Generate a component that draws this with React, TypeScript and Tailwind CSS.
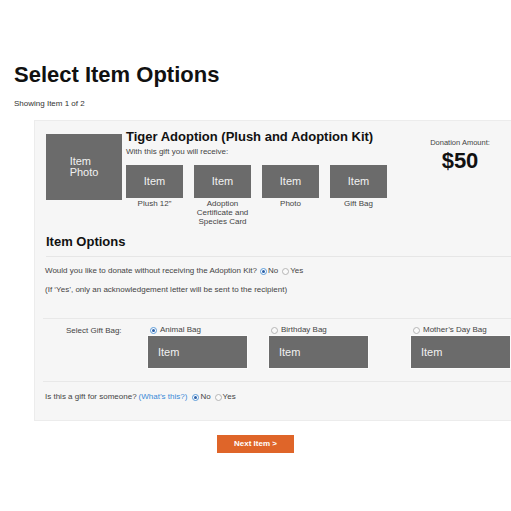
import React from "react";

function Radio({ checked }: { checked?: boolean }) {
  return checked ? (
    <span className="inline-flex h-[7px] w-[7px] items-center justify-center rounded-full border border-[#5a9ad8] bg-white">
      <span className="h-[3px] w-[3px] rounded-full bg-[#2a5fa8]" />
    </span>
  ) : (
    <span className="inline-block h-[7px] w-[7px] rounded-full border border-[#b5b5b5] bg-[#fafafa]" />
  );
}

function KitItem({ label }: { label: React.ReactNode }) {
  return (
    <div className="flex w-[57px] flex-col items-center">
      <div className="flex h-[33px] w-[57px] items-center justify-center bg-[#6b6b6b] text-[11px] leading-none text-[#f2f2f2]">
        Item
      </div>
      <div className="mt-[1px] w-[64px] text-center text-[8px] leading-[9px] text-[#444]">{label}</div>
    </div>
  );
}

function BagOption({ label, checked, width }: { label: string; checked?: boolean; width: string }) {
  return (
    <div className={width}>
      <div className="flex h-[10px] items-center gap-[3px] pl-[3px] text-[8px] leading-[10px] text-[#444]">
        <Radio checked={checked} />
        <span>{label}</span>
      </div>
      <div className="flex h-[34px] w-[101px] items-center border border-[#fbfbfb] bg-[#6b6b6b] pl-[10px] text-[11px] leading-none text-[#f2f2f2]">
        Item
      </div>
    </div>
  );
}

export default function App() {
  return (
    <div
      className="h-[511px] w-[511px] overflow-hidden bg-white"
      style={{ fontFamily: '"Liberation Sans", Arial, Helvetica, sans-serif' }}
    >
      <h1 className="ml-[14px] mt-[62px] text-[22px] font-bold leading-[26px] text-[#111]">Select Item Options</h1>
      <div className="ml-[14px] mt-[10px] text-[8px] leading-[12px] text-[#333]">Showing Item 1 of 2</div>

      <div className="ml-[34px] mt-[10px] w-[500px] border border-[#ececec] bg-[#f6f6f6] pb-[17px]">
        {/* top row */}
        <div className="flex pt-[13px]">
          <div className="ml-[11px] flex h-[66px] w-[76px] shrink-0 items-center justify-center bg-[#6b6b6b]">
            <div className="text-left text-[11px] leading-[11px] text-[#f2f2f2]">
              Item
              <br />
              Photo
            </div>
          </div>
          <div className="ml-[4px] w-[299px] -mt-[5px]">
            <div className="text-[13px] font-bold leading-[15px] text-[#111]">Tiger Adoption (Plush and Adoption Kit)</div>
            <div className="mt-[3px] text-[8px] leading-[10px] text-[#444]">With this gift you will receive:</div>
            <div className="mt-[8px] flex gap-[11px]">
              <KitItem label={"Plush 12\u201d"} />
              <KitItem
                label={
                  <>
                    Adoption
                    <br />
                    Certificate and
                    <br />
                    Species Card
                  </>
                }
              />
              <KitItem label="Photo" />
              <KitItem label="Gift Bag" />
            </div>
          </div>
          <div className="w-[70px] pt-[4px] text-center">
            <div className="text-[7.5px] leading-[10px] text-[#444]">Donation Amount:</div>
            <div className="mt-[1px] text-[22px] font-bold leading-[24px] text-[#111]">$50</div>
          </div>
        </div>

        {/* item options */}
        <div className="ml-[11px] mt-[8px] border-b border-[#e6e6e6] pb-[7px] text-[13px] font-bold leading-[15px] text-[#111]">
          Item Options
        </div>
        <div className="ml-[10px] mt-[8px] flex h-[12px] items-center text-[8px] leading-[12px] text-[#444]">
          <span>Would you like to donate without receiving the Adoption Kit?</span>
          <span className="ml-[3px] flex items-center gap-[1px]">
            <Radio checked />
            <span>No</span>
          </span>
          <span className="ml-[4px] flex items-center gap-[1px]">
            <Radio />
            <span>Yes</span>
          </span>
        </div>
        <div className="ml-[10px] mt-[7px] text-[8px] leading-[12px] text-[#444]">
          (If &#8216;Yes&#8217;, only an acknowledgement letter will be sent to the recipient)
        </div>

        {/* gift bag */}
        <div className="ml-[8px] mt-[22px] flex border-t border-b border-[#e8e8e8] pb-[12px] pt-[6px]">
          <div className="w-[104px] pl-[23px] text-[8px] leading-[12px] text-[#444]">Select Gift Bag:</div>
          <BagOption label="Animal Bag" checked width="w-[121px]" />
          <BagOption label="Birthday Bag" width="w-[142px]" />
          <BagOption label={"Mother\u2019s Day Bag"} width="w-[110px]" />
        </div>

        <div className="ml-[10px] mt-[9px] flex h-[12px] items-center text-[8px] leading-[12px] text-[#444]">
          <span>Is this a gift for someone?</span>
          <span className="ml-[2px] text-[#3a8ad6]">(What&#8217;s this?)</span>
          <span className="ml-[5px] flex items-center gap-[1px]">
            <Radio checked />
            <span>No</span>
          </span>
          <span className="ml-[4px] flex items-center gap-[1px]">
            <Radio />
            <span>Yes</span>
          </span>
        </div>
      </div>

      <div className="mt-[14px] flex justify-center">
        <button className="h-[18px] w-[77px] bg-[#df6529] text-[8px] font-bold leading-[18px] text-white">
          Next Item &gt;
        </button>
      </div>
    </div>
  );
}
